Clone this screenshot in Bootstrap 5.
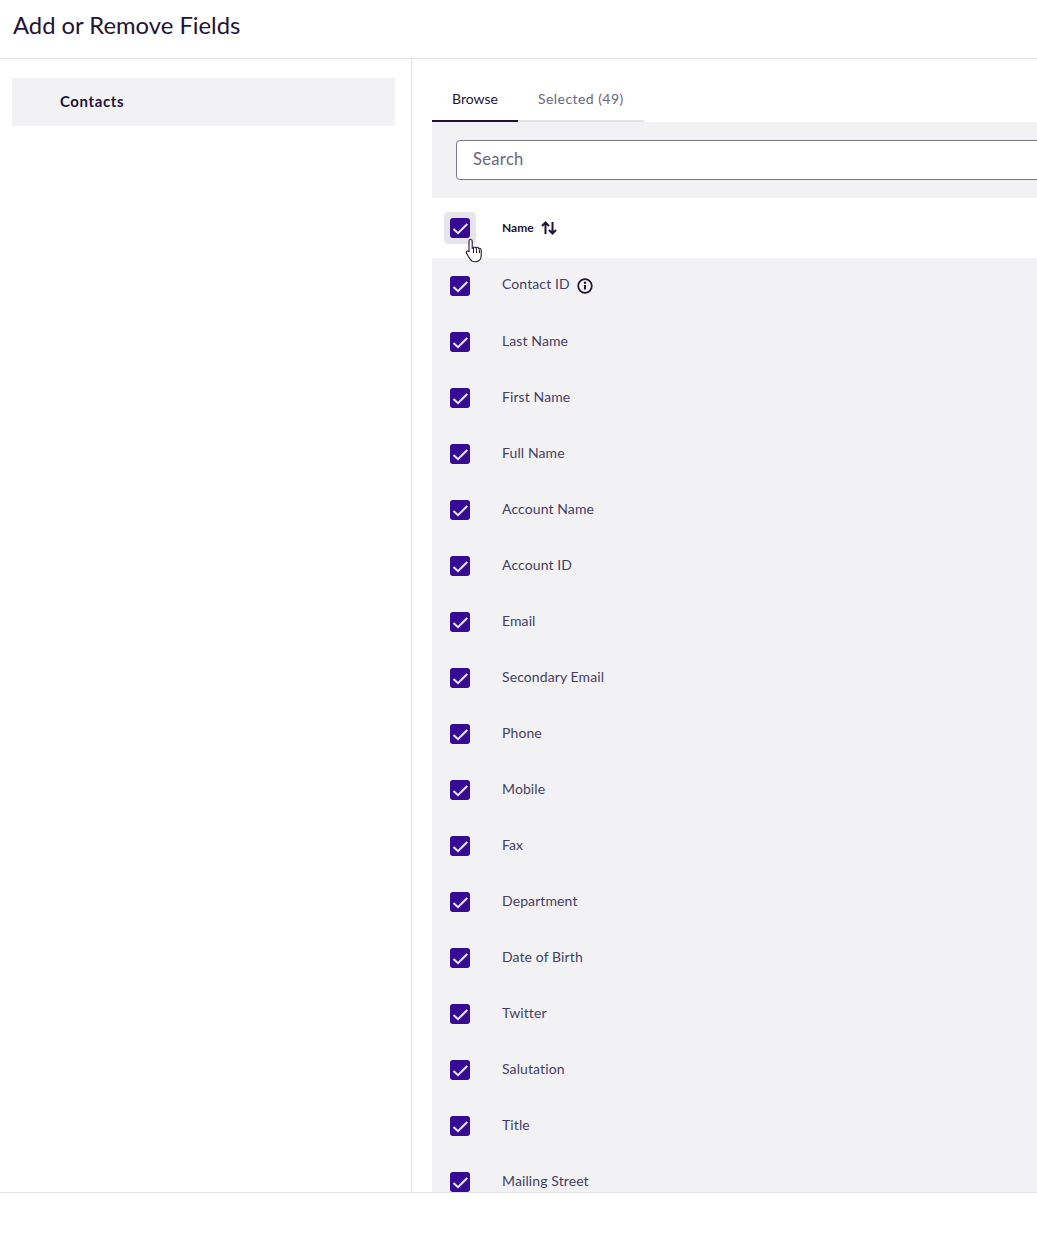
<!DOCTYPE html>
<html lang="en">
<head>
  <meta charset="UTF-8">
  <title>Add or Remove Fields</title>
  <meta name="viewport" content="width=device-width, initial-scale=1.0">
  <link href="https://cdn.jsdelivr.net/npm/bootstrap@5.3.0/dist/css/bootstrap.min.css" rel="stylesheet">
  <style>
    html, body {
      height: 100%;
      overflow: hidden;
    }
    body {
      background-color: #fff;
      color: #453e62;
      font-family: "Lato", "Liberation Sans", sans-serif;
      font-size: 14px;
    }
    .dialog-head {
      height: 59px;
      padding: 10px 0 0 13px;
      border-bottom: 1px solid #e3e2e9;
    }
    .dialog-head h1 {
      margin: 0;
      color: #1f1437;
      font-size: 23.800px;
      font-weight: 400;
      line-height: 30px;
    }
    .dialog-body {
      height: 1133px;
      overflow: hidden;
    }
    .side-col {
      flex: 0 0 412px;
      padding: 19px 16px 0 12px;
      border-right: 1px solid #e3e2e9;
    }
    .side-item {
      height: 48px;
      padding-left: 48px;
      background-color: #f2f2f4;
      color: #1f1437;
      font-size: 15px;
      font-weight: 700;
      letter-spacing: .6px;
      line-height: 47px;
    }
    .main-col {
      flex: 0 0 800px;
      padding: 19px 0 0 20px;
    }
    .field-tabs {
      width: 212px;
      height: 44px;
      border-bottom: 2px solid #e3e2e9;
    }
    .field-tab {
      height: 44px;
      padding: 11px 20px 0;
      line-height: 20px;
      color: #6b6580;
      letter-spacing: .45px;
    }
    .field-tab.is-active {
      width: 86px;
      color: #1f1437;
      border-bottom: 2px solid #1f1437;
      letter-spacing: 0;
    }
    .search-box {
      height: 76px;
      padding: 18px 0 0 24px;
      background-color: #f2f2f4;
    }
    .search-box .form-control {
      height: 40px;
      padding: 0 0 2px 16px;
      border: 1px solid #7c778f;
      border-radius: 4px;
      font-size: 16.500px;
      letter-spacing: .35px;
      color: #453e62;
    }
    .search-box .form-control::placeholder {
      color: #6b6580;
      opacity: 1;
    }
    .head-row {
      position: relative;
      height: 60px;
      padding-left: 18px;
      color: #1f1437;
      font-size: 12px;
      font-weight: 700;
    }
    .check-halo {
      position: absolute;
      left: 12px;
      top: 14px;
      width: 32px;
      height: 32px;
      border-radius: 4px;
      background-color: #e6e5eb;
    }
    .check-mark {
      position: relative;
      flex: 0 0 20px;
      width: 20px;
      height: 20px;
      border-radius: 3px;
      background-color: #350a94;
    }
    .head-label {
      margin-left: 32px;
    }
    .sort-icon {
      margin-left: 7px;
    }
    .hand-cursor {
      position: absolute;
      left: 33px;
      top: 40px;
    }
    .field-row {
      height: 56px;
      padding-left: 18px;
    }
    .field-label {
      margin-left: 32px;
      margin-top: -4px;
      letter-spacing: .1px;
    }
    .field-row:first-child .field-label {
      margin-top: -6px;
    }
    .info-icon {
      margin-left: 7px;
      margin-top: -1px;
    }
    .field-list {
      background-color: #f2f2f4;
    }
    .dialog-foot {
      height: 46px;
      border-top: 1px solid #e3e2e9;
      background-color: #fff;
    }
  </style>
</head>
<body>
  <svg width="0" height="0" class="d-block">
    <symbol id="tick" viewBox="0 0 20 20">
      <path d="M3.500 11l4.500 4.200L17.300 6" fill="none" stroke="#ece8f6" stroke-width="2"/>
    </symbol>
  </svg>

  <div class="dialog-head">
    <h1>Add or Remove Fields</h1>
  </div>

  <div class="dialog-body d-flex">
    <div class="side-col">
      <div class="side-item">Contacts</div>
    </div>

    <div class="main-col">
      <div class="field-tabs d-flex">
        <div class="field-tab is-active">Browse</div>
        <div class="field-tab">Selected (49)</div>
      </div>

      <div class="search-box">
        <input type="text" class="form-control" placeholder="Search">
      </div>

      <div class="head-row d-flex align-items-center">
        <span class="check-halo"></span>
        <span class="check-mark"><svg width="20" height="20" class="d-block"><use href="#tick"/></svg></span>
        <span class="head-label">Name</span>
        <svg class="sort-icon" width="16" height="14" viewBox="0 0 16 14">
          <path d="M4.500 13V2M1 5l3.500-3.500L8 5M11.500 1v11M8 9l3.500 3.500L15 9" fill="none" stroke="#1f1437" stroke-width="2"/>
        </svg>
        <svg class="hand-cursor" width="19" height="25" viewBox="0 0 18 25">
          <path d="M5 1.500c1 0 1.700.7 1.700 1.800v7l1.100-.3c.2-.8.900-1.100 1.600-1 .6.100 1 .5 1.200 1 .4-.6 1-.8 1.600-.6.500.2.900.6 1 1.100.6-.4 1.300-.3 1.800.1.500.4.700 1 .7 1.700v5.200c0 3.500-2.200 6-5.500 6.200-2.600.2-4.600-.8-5.900-3L1 15.400c-.5-.8-.3-1.700.4-2.100.7-.4 1.500-.2 2 .4l.1.300V3.300C3.500 2.200 4 1.500 5 1.500z" fill="#fff" stroke="#1f1437" stroke-width="1.100"/>
          <path d="M8 10v5M11 10.500V15M14 11.500V15" fill="none" stroke="#1f1437"/>
        </svg>
      </div>

      <div class="field-list" id="fieldList"></div>
    </div>
  </div>

  <div class="dialog-foot"></div>

  <script src="https://cdn.jsdelivr.net/npm/bootstrap@5.3.0/dist/js/bootstrap.bundle.min.js"></script>
  <script>
    const campos = ['Contact ID', 'Last Name', 'First Name', 'Full Name', 'Account Name', 'Account ID',
      'Email', 'Secondary Email', 'Phone', 'Mobile', 'Fax', 'Department', 'Date of Birth', 'Twitter',
      'Salutation', 'Title', 'Mailing Street'];
    const info = '<svg class="info-icon" width="16" height="16" viewBox="0 0 16 16">' +
      '<circle cx="8" cy="8" r="6.800" fill="none" stroke="#1f1437" stroke-width="1.700"/>' +
      '<path d="M8 7v4.500" stroke="#1f1437" stroke-width="2"/><circle cx="8" cy="4.700" r="1.200" fill="#1f1437"/></svg>';
    document.getElementById('fieldList').innerHTML = campos.map((c, i) =>
      '<div class="field-row d-flex align-items-center">' +
      '<span class="check-mark"><svg width="20" height="20" class="d-block"><use href="#tick"/></svg></span>' +
      '<span class="field-label">' + c + '</span>' + (i === 0 ? info : '') + '</div>').join('');
  </script>
</body>
</html>
